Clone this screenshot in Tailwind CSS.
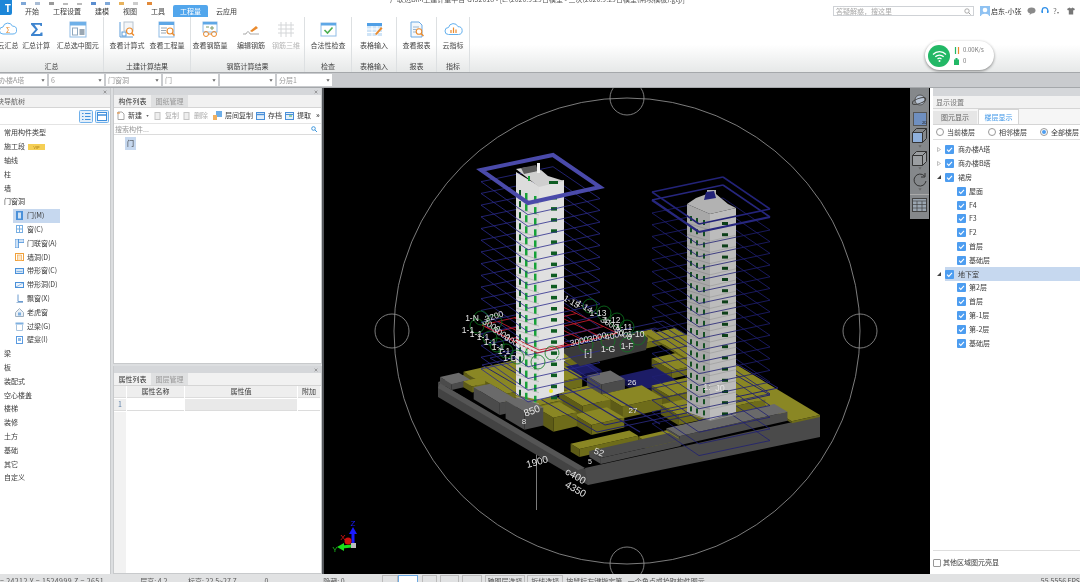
<!DOCTYPE html>
<html lang="zh-CN">
<head>
<meta charset="UTF-8">
<title>GTJ2018</title>
<script src="https://cdn.jsdelivr.net/npm/@tailwindcss/browser@4"></script>
</head>
<body class="bg-white">
<svg class="hidden">
  <symbol id="chk" viewBox="0 0 9 9"><rect width="9" height="9" rx="1" fill="#4d9df0"/><path d="M2 4.6l1.8 1.8L7 2.9" fill="none" stroke="#fff" stroke-width="1.1"/></symbol>
  <symbol id="close" viewBox="0 0 5 5"><path d="M.8.8l3.4 3.4M4.2.8L.8 4.2" stroke="#777" stroke-width=".8"/></symbol>
  <symbol id="caret" viewBox="0 0 5 3"><path d="M.5 0h4L2.500 3z" fill="#666"/></symbol>
</svg>

<div class="w-[1080px] h-[582px] overflow-hidden flex flex-col relative text-[7px] text-[#3a3a3a] blur-[0.35px] font-['Noto_Sans_CJK_SC','Liberation_Sans',sans-serif]">

  <!-- title + tabs -->
  <div class="h-[17px] flex shrink-0 bg-white">
    <div class="w-[12px] h-[15px] bg-[#1c86d8] rounded-br-[2px] flex items-center justify-end pr-[1px] text-white font-bold text-[10px] leading-none">T</div>
    <div class="flex-1 flex flex-col">
      <div class="h-[5px] relative overflow-hidden flex items-end">
        <div class="flex items-end gap-[9px] pl-[9px] h-full">
          <span class="w-[5px] h-[3px] bg-[#7fa8d8]"></span><span class="w-[5px] h-[3px] bg-[#a9bcd4]"></span><span class="w-[5px] h-[3px] bg-[#999]"></span><span class="w-[5px] h-[2px] bg-[#bbb]"></span><span class="w-[5px] h-[2px] bg-[#bbb]"></span><span class="w-[5px] h-[3px] bg-[#5b8ed0]"></span><span class="w-[5px] h-[3px] bg-[#7fa8d8]"></span><span class="w-[5px] h-[3px] bg-[#e7b25d]"></span><span class="w-[5px] h-[3px] bg-[#ccc]"></span><span class="w-[5px] h-[3px] bg-[#e28a3a]"></span>
        </div>
        <div class="absolute left-[378px] top-[-5px] whitespace-nowrap text-[#555] leading-[9px]">广联达BIM土建计量平台 GTJ2018 - [E:\2020.9.29日模型 - 三次(2020.9.29日模型(闸坝模板).gtj)]</div>
      </div>
      <div class="h-[12px] flex items-center pl-[13px] pr-[5px] gap-[14px] leading-none">
        <span>开始</span><span>工程设置</span><span>建模</span><span>视图</span><span>工具</span>
        <span class="ml-[-6px] w-[35px] h-[12px] bg-[#52a6ec] text-white flex items-center justify-center rounded-t-[2px]">工程量</span>
        <span class="ml-[-6px]">云应用</span>
        <div class="ml-auto flex items-center">
          <div class="w-[141px] h-[10px] border border-[#cfd2d6] flex items-center justify-between px-[2px] text-[#a8a8a8]">
            <span>答疑解惑，搜这里</span>
            <svg width="7" height="7" viewBox="0 0 7 7"><circle cx="3" cy="3" r="2.200" fill="none" stroke="#999" stroke-width=".8"/><path d="M4.600 4.600L6.500 6.500" stroke="#999"/></svg>
          </div>
          <svg class="ml-[6px]" width="10" height="10" viewBox="0 0 10 10"><rect width="10" height="10" fill="#8fc2f2"/><circle cx="5" cy="4" r="2.300" fill="#fff"/><path d="M1 10c0-3 8-3 8 0z" fill="#fff"/></svg>
          <span class="ml-[1px] w-[32px] text-[#333] whitespace-nowrap">启东-小张</span>
          <svg class="ml-[4px]" width="9" height="8" viewBox="0 0 9 8"><ellipse cx="4.500" cy="3.500" rx="4" ry="3" fill="#8a8a8a"/><path d="M3 6l-.5 2L5 6.300z" fill="#8a8a8a"/></svg>
          <svg class="ml-[5px]" width="8" height="8" viewBox="0 0 8 8"><path d="M1.200 5V3.500a2.800 2.800 0 0 1 5.600 0V5" fill="none" stroke="#2f8fe8" stroke-width="1.200"/><rect x=".5" y="3.500" width="1.500" height="2.500" fill="#2f8fe8"/><rect x="6" y="3.500" width="1.500" height="2.500" fill="#2f8fe8"/></svg>
          <span class="ml-[4px] w-[8px] text-[#777] text-[8px] leading-none whitespace-nowrap">?<span class="text-[4px]">▾</span></span>
          <svg class="ml-[6px]" width="8" height="8" viewBox="0 0 8 8"><path d="M2.500.5L0 2l1 1.500.8-.4V7.500h4.400V3.100l.8.400L8 2 5.500.5 4 1.500z" fill="#777"/></svg>
        </div>
      </div>
    </div>
  </div>

  <!-- ribbon -->
  <div class="h-[56px] shrink-0 flex border-b border-[#a5a8ab] bg-gradient-to-b from-white via-white to-[#e6e8e8] text-[#444]">
    <div class="w-[104px] shrink-0 border-r border-[#dde0e2] flex flex-col justify-between pb-[1px]">
      <div class="flex pt-[4px]">
        <div class="w-[24px] ml-[-4px] flex flex-col items-center">
          <svg width="18" height="17" viewBox="0 0 18 17"><path d="M4 13a3.500 3.500 0 0 1 0-7 5 5 0 0 1 9.500-.8A3.800 3.800 0 0 1 14 13z" fill="#fff" stroke="#63b0ee"/><text x="9" y="11.500" text-anchor="middle" font-size="7" fill="#e88a2e">Σ</text></svg>
          <span class="mt-[2px] leading-[10px] whitespace-nowrap">云汇总</span>
        </div>
        <div class="w-[33px] flex flex-col items-center">
          <svg width="17" height="17" viewBox="0 0 17 17"><path d="M3 2h11v3h-1.500l-.5-1.200H6.500L10 8.500 6 13h6l.8-1.500H14.500V15H3v-1.500L7.500 8.500 3 3.500z" fill="#3f85cf"/></svg>
          <span class="mt-[2px] leading-[10px] whitespace-nowrap">汇总计算</span>
        </div>
        <div class="w-[51px] flex flex-col items-center">
          <svg width="18" height="17" viewBox="0 0 18 17"><rect x="1" y="1" width="16" height="15" fill="#fff" stroke="#8fbce6"/><rect x="1" y="1" width="16" height="3.500" fill="#6fb0e8"/><rect x="3.500" y="7" width="5" height="7" fill="none" stroke="#8fa8bf"/><rect x="10.500" y="8" width="5" height="6" fill="#9aa7b3"/></svg>
          <span class="mt-[2px] leading-[10px] whitespace-nowrap">汇总选中图元</span>
        </div>
      </div>
      <div class="text-center leading-[10px]">汇总</div>
    </div>

    <div class="w-[87px] shrink-0 border-r border-[#dde0e2] flex flex-col justify-between pb-[1px]">
      <div class="flex pt-[4px] pl-[3px]">
        <div class="w-[40px] flex flex-col items-center">
          <svg width="18" height="17" viewBox="0 0 18 17"><path d="M2 1v15h13" fill="none" stroke="#5b9bd8"/><rect x="4" y="11" width="4" height="4" fill="none" stroke="#5b9bd8"/><rect x="6" y="1" width="9" height="9" fill="#f4f6f8" stroke="#b8c4d0"/><circle cx="11.500" cy="10" r="3" fill="#fff" stroke="#ea8a2d" stroke-width="1.200"/><path d="M13.500 12l2.500 2.500" stroke="#ea8a2d" stroke-width="1.500"/></svg>
          <span class="mt-[2px] leading-[10px] whitespace-nowrap">查看计算式</span>
        </div>
        <div class="w-[40px] flex flex-col items-center">
          <svg width="18" height="17" viewBox="0 0 18 17"><rect x="1" y="1" width="15" height="15" fill="#fff" stroke="#8fbce6"/><rect x="1" y="1" width="15" height="3" fill="#5ea7e6"/><path d="M3 7h6M3 9.500h5M3 12h5" stroke="#9aa7b3"/><circle cx="12" cy="10" r="3" fill="#fff" stroke="#ea8a2d" stroke-width="1.200"/><path d="M14 12l2.500 2.500" stroke="#ea8a2d" stroke-width="1.500"/></svg>
          <span class="mt-[2px] leading-[10px] whitespace-nowrap">查看工程量</span>
        </div>
      </div>
      <div class="text-center leading-[10px]">土建计算结果</div>
    </div>

    <div class="w-[114px] shrink-0 border-r border-[#dde0e2] flex flex-col justify-between pb-[1px]">
      <div class="flex pt-[4px]">
        <div class="w-[38px] flex flex-col items-center">
          <svg width="18" height="17" viewBox="0 0 18 17"><rect x="2" y="1" width="14" height="10" fill="#fff" stroke="#8fbce6"/><rect x="2" y="1" width="14" height="2.500" fill="#5ea7e6"/><path d="M5 6h3M11 5v4M9 7h4" stroke="#7c9a6a"/><circle cx="5" cy="13" r="2.500" fill="none" stroke="#ea8a2d"/><circle cx="13" cy="13" r="2.500" fill="none" stroke="#ea8a2d"/><path d="M7.500 13h3" stroke="#ea8a2d"/></svg>
          <span class="mt-[2px] leading-[10px] whitespace-nowrap">查看钢筋量</span>
        </div>
        <div class="w-[44px] flex flex-col items-center">
          <svg width="18" height="17" viewBox="0 0 18 17"><path d="M1 13h3c1-3 3-3 4 0h9" fill="none" stroke="#a9a9a9"/><path d="M8 10l6-5 2 2-6 4z" fill="#ea8a2d"/></svg>
          <span class="mt-[2px] leading-[10px] whitespace-nowrap">编辑钢筋</span>
        </div>
        <div class="w-[26px] flex flex-col items-center text-[#b5b5b5]">
          <svg width="18" height="17" viewBox="0 0 18 17"><path d="M4 1v15M9 1v15M14 1v15M1 4h16M1 8h16M1 12h16" stroke="#d4d6d8"/></svg>
          <span class="mt-[2px] leading-[10px] whitespace-nowrap">钢筋三维</span>
        </div>
      </div>
      <div class="text-center leading-[10px]">钢筋计算结果</div>
    </div>

    <div class="w-[47px] shrink-0 border-r border-[#dde0e2] flex flex-col justify-between pb-[1px]">
      <div class="flex flex-col items-center pt-[4px]">
        <svg width="17" height="17" viewBox="0 0 17 17"><rect x="1" y="2" width="15" height="13" fill="#fff" stroke="#8fbce6"/><rect x="1" y="2" width="15" height="2.500" fill="#5ea7e6"/><path d="M4.500 9l3 3 5-5.500" fill="none" stroke="#4caf50" stroke-width="1.600"/></svg>
        <span class="mt-[2px] leading-[10px] whitespace-nowrap">合法性检查</span>
      </div>
      <div class="text-center leading-[10px]">检查</div>
    </div>

    <div class="w-[45px] shrink-0 border-r border-[#dde0e2] flex flex-col justify-between pb-[1px]">
      <div class="flex flex-col items-center pt-[4px]">
        <svg width="17" height="17" viewBox="0 0 17 17"><rect x="1" y="2" width="15" height="13" fill="#cfe4f7"/><rect x="1" y="2" width="15" height="3" fill="#4f9fe6"/><path d="M1 8h15M1 11.500h15M6 5v10M11 5v10" stroke="#fff"/><path d="M9 13l6-7 1.500 1.500L10.500 14z" fill="#ea8a2d"/></svg>
        <span class="mt-[2px] leading-[10px] whitespace-nowrap">表格输入</span>
      </div>
      <div class="text-center leading-[10px]">表格输入</div>
    </div>

    <div class="w-[40px] shrink-0 border-r border-[#dde0e2] flex flex-col justify-between pb-[1px]">
      <div class="flex flex-col items-center pt-[4px]">
        <svg width="16" height="17" viewBox="0 0 16 17"><path d="M2 1h8l3 3v12H2z" fill="#f4f8fc" stroke="#6aa9e4"/><path d="M4 6h6M4 8.500h3M4 11h3" stroke="#9ab6d0"/><circle cx="10" cy="10.500" r="2.800" fill="#fff" stroke="#ea8a2d" stroke-width="1.100"/><path d="M12 12.500l2.500 2.500" stroke="#ea8a2d" stroke-width="1.400"/></svg>
        <span class="mt-[2px] leading-[10px] whitespace-nowrap">查看报表</span>
      </div>
      <div class="text-center leading-[10px]">报表</div>
    </div>

    <div class="w-[33px] shrink-0 border-r border-[#dde0e2] flex flex-col justify-between pb-[1px]">
      <div class="flex flex-col items-center pt-[4px]">
        <svg width="19" height="17" viewBox="0 0 19 17"><path d="M4.500 13.500a3.500 3.500 0 0 1 0-7 5 5 0 0 1 9.500-.8 3.900 3.900 0 0 1 .5 7.800z" fill="#fff" stroke="#63b0ee"/><path d="M7 12V9M9.500 12V6.500M12 12V8.500" stroke="#ea8a2d" stroke-width="1.200"/></svg>
        <span class="mt-[2px] leading-[10px] whitespace-nowrap">云指标</span>
      </div>
      <div class="text-center leading-[10px]">指标</div>
    </div>
  </div>

  <!-- combos -->
  <div class="h-[15px] shrink-0 bg-[#c9cbce] border-b border-[#a5a8ab] flex items-center text-[#9a9a9a] gap-[2px]">
    <div class="w-[47px] h-[12px] bg-white flex items-center justify-between pr-[2px] overflow-hidden whitespace-nowrap"><span class="ml-[-1px]">办楼A塔</span><svg width="4" height="3"><use href="#caret"/></svg></div>
    <div class="w-[55px] h-[12px] bg-white flex items-center justify-between px-[2px]"><span>6</span><svg width="4" height="3"><use href="#caret"/></svg></div>
    <div class="w-[55px] h-[12px] bg-white flex items-center justify-between px-[2px]"><span>门窗洞</span><svg width="4" height="3"><use href="#caret"/></svg></div>
    <div class="w-[55px] h-[12px] bg-white flex items-center justify-between px-[2px]"><span>门</span><svg width="4" height="3"><use href="#caret"/></svg></div>
    <div class="w-[55px] h-[12px] bg-white flex items-center justify-end px-[2px]"><svg width="4" height="3"><use href="#caret"/></svg></div>
    <div class="w-[55px] h-[12px] bg-white flex items-center justify-between px-[2px]"><span>分层1</span><svg width="4" height="3"><use href="#caret"/></svg></div>
  </div>

  <!-- main -->
  <div class="flex-1 min-h-0 flex bg-[#dcdee0]">

    <!-- left nav -->
    <div class="w-[111px] shrink-0 bg-white border-r border-[#c8cacc] flex flex-col">
      <div class="h-[7px] bg-[#d5d7da] flex justify-end items-center pr-[3px]"><svg width="4" height="4"><use href="#close"/></svg></div>
      <div class="h-[13px] bg-[#f1f1f1] border-b border-[#d5d5d5] flex items-center overflow-hidden whitespace-nowrap text-[#666]"><span class="ml-[-10px]">模块导航树</span></div>
      <div class="h-[17px] flex items-center justify-end gap-[2px] pr-[1px] border-b border-[#e4e4e4]">
        <svg width="14" height="13" viewBox="0 0 14 13"><rect x=".5" y=".5" width="13" height="12" rx="1" fill="#e3effa" stroke="#70b0ea"/><path d="M3 3.500h1.500M6 3.500h5.500M3 6.500h1.500M6 6.500h5.500M3 9.500h1.500M6 9.500h5.500" stroke="#3f8fdc"/></svg>
        <svg width="14" height="13" viewBox="0 0 14 13"><rect x=".5" y=".5" width="13" height="12" rx="1" fill="#e3effa" stroke="#70b0ea"/><rect x="2.500" y="2.500" width="9" height="8" fill="#fff" stroke="#3f8fdc"/><path d="M2.500 5h9" stroke="#3f8fdc" stroke-width="1.500"/></svg>
      </div>
      <div class="pt-[1px] leading-none">
        <div class="h-[13.8px] flex items-center pl-[4px]">常用构件类型</div>
        <div class="h-[13.8px] flex items-center pl-[4px]">施工段<span class="ml-[3px] w-[17px] h-[6px] bg-[#f5cf55] text-[#a87a10] text-[4px] flex items-center justify-center">VIP</span></div>
        <div class="h-[13.8px] flex items-center pl-[4px]">轴线</div>
        <div class="h-[13.8px] flex items-center pl-[4px]">柱</div>
        <div class="h-[13.8px] flex items-center pl-[4px]">墙</div>
        <div class="h-[13.8px] flex items-center pl-[4px]">门窗洞</div>
        <div class="h-[13.8px] flex items-center ml-[13px] w-[47px] pl-[3px] gap-[4px] bg-[#c6d8ef]"><svg width="7" height="9" viewBox="0 0 7 9"><rect width="7" height="9" fill="#4a90d9"/><rect x="2" y="1.500" width="3" height="6" fill="#cfe2f5"/></svg>门(M)</div>
        <div class="h-[13.8px] flex items-center ml-[13px] pl-[3px] gap-[4px]"><svg width="7" height="8" viewBox="0 0 7 8"><rect x=".5" y=".5" width="6" height="7" fill="none" stroke="#77aee2"/><path d="M3.500 0v8M0 4h7" stroke="#77aee2"/></svg>窗(C)</div>
        <div class="h-[13.8px] flex items-center ml-[13px] pl-[2px] gap-[3px]"><svg width="9" height="9" viewBox="0 0 9 9"><path d="M0 0h3.500v9H0zM3.500 0H9v3.500H3.500z" fill="#cfe2f5" stroke="#4a90d9" stroke-width=".8"/></svg>门联窗(A)</div>
        <div class="h-[13.8px] flex items-center ml-[13px] pl-[2px] gap-[3px]"><svg width="9" height="8" viewBox="0 0 9 8"><rect x=".5" y=".5" width="8" height="7" fill="#fff" stroke="#f0a13c"/><rect x="2.500" y="2" width="4" height="5.500" fill="#fde7c8" stroke="#f0a13c" stroke-width=".6"/></svg>墙洞(D)</div>
        <div class="h-[13.8px] flex items-center ml-[13px] pl-[2px] gap-[3px]"><svg width="9" height="6" viewBox="0 0 9 6"><rect x=".5" y=".5" width="8" height="5" fill="#d8e8f7" stroke="#4a90d9"/><path d="M1.500 3.500h6" stroke="#4a90d9" stroke-width=".6"/></svg>带形窗(C)</div>
        <div class="h-[13.8px] flex items-center ml-[13px] pl-[2px] gap-[3px]"><svg width="9" height="6" viewBox="0 0 9 6"><rect x=".5" y=".5" width="8" height="5" fill="#eef4fb" stroke="#4a90d9"/><path d="M1 5l7-4" stroke="#4a90d9" stroke-width=".6"/></svg>带形洞(D)</div>
        <div class="h-[13.8px] flex items-center ml-[13px] pl-[2px] gap-[3px]"><svg width="9" height="9" viewBox="0 0 9 9"><path d="M3 .5v7H8" fill="none" stroke="#6a9bd0"/><path d="M1.500 8.500H8" stroke="#9cb9d8"/></svg>飘窗(X)</div>
        <div class="h-[13.8px] flex items-center ml-[13px] pl-[2px] gap-[3px]"><svg width="9" height="9" viewBox="0 0 9 9"><path d="M.5 4.500L4.500.5l4 4V8.500h-8z" fill="#eaf0f6" stroke="#9fb0c0"/><rect x="3" y="4.500" width="3" height="3" fill="#7fb0e0"/></svg>老虎窗</div>
        <div class="h-[13.8px] flex items-center ml-[13px] pl-[2px] gap-[3px]"><svg width="9" height="9" viewBox="0 0 9 9"><rect x=".5" y=".5" width="8" height="2" fill="#7fb0e0"/><path d="M1.500 2.500V8.500h6V2.500" fill="none" stroke="#a9c4de"/></svg>过梁(G)</div>
        <div class="h-[13.8px] flex items-center ml-[13px] pl-[3px] gap-[4px]"><svg width="7" height="8" viewBox="0 0 7 8"><rect x=".5" y=".5" width="6" height="7" fill="#fff" stroke="#5a9ae0"/><rect x="2" y="2" width="3" height="3" fill="#8dbbe8"/></svg>壁龛(I)</div>
        <div class="h-[13.8px] flex items-center pl-[4px]">梁</div>
        <div class="h-[13.8px] flex items-center pl-[4px]">板</div>
        <div class="h-[13.8px] flex items-center pl-[4px]">装配式</div>
        <div class="h-[13.8px] flex items-center pl-[4px]">空心楼盖</div>
        <div class="h-[13.8px] flex items-center pl-[4px]">楼梯</div>
        <div class="h-[13.8px] flex items-center pl-[4px]">装修</div>
        <div class="h-[13.8px] flex items-center pl-[4px]">土方</div>
        <div class="h-[13.8px] flex items-center pl-[4px]">基础</div>
        <div class="h-[13.8px] flex items-center pl-[4px]">其它</div>
        <div class="h-[13.8px] flex items-center pl-[4px]">自定义</div>
      </div>
    </div>

    <!-- middle -->
    <div class="w-[209px] shrink-0 ml-[2px] flex flex-col">
      <div class="h-[276px] bg-white border-x border-b border-[#c8cacc] flex flex-col">
        <div class="h-[7px] bg-[#d5d7da] flex justify-end items-center pr-[3px]"><svg width="4" height="4"><use href="#close"/></svg></div>
        <div class="h-[13px] bg-[#f1f1f1] border-b border-[#d5d5d5] flex items-end">
          <span class="w-[37px] h-[12px] flex items-center justify-center text-[#333]">构件列表</span>
          <span class="w-[37px] h-[12px] bg-[#dfe0e1] flex items-center justify-center text-[#999]">图纸管理</span>
        </div>
        <div class="h-[16px] flex items-center pl-[3px] gap-[3px] whitespace-nowrap border-b border-[#e5e5e5]">
          <svg width="8" height="9" viewBox="0 0 8 9"><path d="M1 1h4l2 2v5.500H1z" fill="#fff" stroke="#a8a8a8"/><path d="M0 2h3" stroke="#ea8a2d"/></svg>
          <span>新建</span><svg class="ml-[1px]" width="3" height="2"><use href="#caret"/></svg>
          <svg class="ml-[2px]" width="8" height="8" viewBox="0 0 8 8"><rect x="1" y=".5" width="5" height="7" fill="#eee" stroke="#c5c5c5"/></svg><span class="text-[#aaa]">复制</span>
          <svg class="ml-[1px]" width="8" height="8" viewBox="0 0 8 8"><rect x="1" y=".5" width="5" height="7" fill="#eee" stroke="#c5c5c5"/></svg><span class="text-[#aaa]">删除</span>
          <svg class="ml-[2px]" width="9" height="9" viewBox="0 0 9 9"><rect x="3" y="0" width="6" height="6" fill="#6eaee8"/><rect x="0" y="4" width="4" height="5" fill="#f0b060"/></svg><span>层间复制</span>
          <svg width="9" height="8" viewBox="0 0 9 8"><rect x=".5" y=".5" width="8" height="7" fill="#e3effa" stroke="#4a90d9"/><path d="M.5 2.500h8" stroke="#4a90d9" stroke-width="1.400"/></svg><span>存档</span>
          <svg width="9" height="8" viewBox="0 0 9 8"><rect x=".5" y=".5" width="8" height="7" fill="#e3effa" stroke="#4a90d9"/><path d="M.5 2.500h8" stroke="#4a90d9"/><path d="M4 4h3" stroke="#4caf50"/></svg><span>提取</span>
          <span class="ml-[2px] font-bold">»</span>
        </div>
        <div class="h-[11px] flex items-center justify-between px-[1px] pr-[4px] text-[#999] border-b border-[#dcdcdc]">
          <span>搜索构件...</span>
          <svg width="6" height="6" viewBox="0 0 6 6"><circle cx="2.500" cy="2.500" r="1.800" fill="none" stroke="#3f97dc"/><path d="M4 4l2 2" stroke="#3f97dc"/></svg>
        </div>
        <div class="pt-[2px] pl-[11px]"><span class="w-[11px] h-[13px] bg-[#c6d8ef] flex items-center justify-center text-[#333]">门</span></div>
      </div>
      <div class="flex-1 mt-[2px] bg-white border-x border-b border-[#c8cacc] flex flex-col">
        <div class="h-[7px] bg-[#d5d7da] flex justify-end items-center pr-[3px]"><svg width="4" height="4"><use href="#close"/></svg></div>
        <div class="h-[13px] bg-[#f1f1f1] border-b border-[#d5d5d5] flex items-end">
          <span class="w-[37px] h-[12px] flex items-center justify-center text-[#333]">属性列表</span>
          <span class="w-[37px] h-[12px] bg-[#dfe0e1] flex items-center justify-center text-[#999]">图层管理</span>
        </div>
        <div class="flex-1 grid grid-cols-[12px_57px_112px_22px] grid-rows-[12px_12px_1fr] gap-[1px] text-center">
          <div class="bg-[#eeeeee] border-b border-[#dcdcdc]"></div>
          <div class="bg-[#eeeeee] border-b border-[#dcdcdc] flex items-center justify-center">属性名称</div>
          <div class="bg-[#eeeeee] border-b border-[#dcdcdc] flex items-center justify-center">属性值</div>
          <div class="bg-[#eeeeee] border-b border-[#dcdcdc] flex items-center justify-center">附加</div>
          <div class="bg-[#eeeeee] border-b border-[#dcdcdc] flex items-center justify-center text-[#5a7fa8]">1</div>
          <div class="border-b border-[#dcdcdc]"></div>
          <div class="bg-[#e9e9e9] border-b border-[#dcdcdc]"></div>
          <div class="border-b border-[#dcdcdc]"></div>
          <div class="bg-[#f2f2f2]"></div>
        </div>
      </div>
    </div>

    <!-- canvas -->
    <div class="w-[608px] shrink-0 relative bg-black border-l-2 border-[#55585c]">
      <svg id="scene" class="absolute left-0 top-0" width="606" height="486" viewBox="324 88 606 486"></svg>
      <!-- view toolbar -->
      <div class="absolute right-[1px] top-0 w-[19px] h-[131px] bg-[#85888b] flex flex-col items-center pt-[6px]">
        <svg width="15" height="13" viewBox="0 0 15 13"><circle cx="8" cy="6" r="5" fill="#b9c4d4" stroke="#555"/><ellipse cx="7" cy="7" rx="7" ry="2.500" fill="none" stroke="#444" transform="rotate(-20 7 7)"/></svg>
        <svg class="mt-[5px]" width="14" height="14" viewBox="0 0 14 14"><rect x=".5" y=".5" width="13" height="13" fill="#6f8fc0" stroke="#555"/><text x="9" y="12" font-size="4" fill="#222">2D</text></svg>
        <svg class="mt-[2px]" width="15" height="15" viewBox="0 0 15 15"><rect x="1" y="5" width="9" height="9" fill="#8fb0dc"/><path d="M.5 4.500h10v10H.5zM.5 4.500l4-4h10v10l-4 4M10.500 4.500l4-4" fill="none" stroke="#333"/></svg>
        <svg class="mt-[2px]" width="4" height="3"><use href="#caret"/></svg>
        <svg class="mt-[3px]" width="15" height="15" viewBox="0 0 15 15"><path d="M.5 4.500h10v10H.5zM.5 4.500l4-4h10v10l-4 4M10.500 4.500l4-4" fill="#9b9ea1" stroke="#333"/></svg>
        <svg class="mt-[1px]" width="4" height="3"><use href="#caret"/></svg>
        <svg class="mt-[3px]" width="14" height="14" viewBox="0 0 14 14"><path d="M11.500 3A6 6 0 1 0 13 8" fill="none" stroke="#333"/><path d="M12 0v4H8" fill="none" stroke="#333"/></svg>
        <svg class="mt-[1px]" width="4" height="3"><use href="#caret"/></svg>
        <div class="mt-[3px] w-full h-px bg-[#aaa]"></div>
        <svg class="mt-[3px]" width="15" height="14" viewBox="0 0 15 14"><rect x=".5" y=".5" width="14" height="13" fill="#9aa5b0" stroke="#444"/><path d="M.5 3h14M5 3v10M10 3v10M.5 6.500h14M.5 10h14" stroke="#444" stroke-width=".7"/></svg>
      </div>
    </div>

    <!-- right panel -->
    <div class="w-[150px] shrink-0 bg-white flex flex-col border-l-[3px] border-white">
      <div class="h-[8px] bg-[#d5d7da]"></div>
      <div class="h-[13px] bg-[#f1f1f1] border-b border-[#d5d5d5] flex items-center pl-[3px] text-[#777]">显示设置</div>
      <div class="h-[16px] bg-[#f6f6f6] border-b border-[#d5d5d5] flex items-end gap-[1px]">
        <span class="w-[44px] h-[13px] bg-[#e6e6e6] flex items-center justify-center text-[#666]">图元显示</span>
        <span class="w-[41px] h-[15px] bg-white border-x border-t border-[#d5d5d5] flex items-center justify-center text-[#3f97e8]">楼层显示</span>
      </div>
      <div class="h-[15px] flex items-center pl-[3px] border-b border-[#dedede] whitespace-nowrap">
        <span class="w-[8px] h-[8px] rounded-full border border-[#999]"></span><span class="ml-[3px] w-[41px]">当前楼层</span>
        <span class="w-[8px] h-[8px] rounded-full border border-[#999]"></span><span class="ml-[3px] w-[41px]">相邻楼层</span>
        <span class="w-[8px] h-[8px] rounded-full border border-[#999] flex items-center justify-center"><span class="w-[4px] h-[4px] rounded-full bg-[#4d9df0]"></span></span><span class="ml-[3px]">全部楼层</span>
      </div>
      <div class="flex-1 pt-[3px] leading-none">
        <div class="h-[13.8px] flex items-center pl-[4px]"><svg width="4" height="5" viewBox="0 0 4 5"><path d="M.5.500l3 2-3 2z" fill="#fff" stroke="#999" stroke-width=".6"/></svg><svg class="ml-[4px]" width="9" height="9"><use href="#chk"/></svg><span class="ml-[4px]">商办楼A塔</span></div>
        <div class="h-[13.8px] flex items-center pl-[4px]"><svg width="4" height="5" viewBox="0 0 4 5"><path d="M.5.500l3 2-3 2z" fill="#fff" stroke="#999" stroke-width=".6"/></svg><svg class="ml-[4px]" width="9" height="9"><use href="#chk"/></svg><span class="ml-[4px]">商办楼B塔</span></div>
        <div class="h-[13.8px] flex items-center pl-[4px]"><svg width="4" height="5" viewBox="0 0 4 5"><path d="M0 4h4V0z" fill="#444"/></svg><svg class="ml-[4px]" width="9" height="9"><use href="#chk"/></svg><span class="ml-[4px]">裙房</span></div>
        <div class="h-[13.8px] flex items-center pl-[24px]"><svg width="9" height="9"><use href="#chk"/></svg><span class="ml-[3px]">屋面</span></div>
        <div class="h-[13.8px] flex items-center pl-[24px]"><svg width="9" height="9"><use href="#chk"/></svg><span class="ml-[3px]">F4</span></div>
        <div class="h-[13.8px] flex items-center pl-[24px]"><svg width="9" height="9"><use href="#chk"/></svg><span class="ml-[3px]">F3</span></div>
        <div class="h-[13.8px] flex items-center pl-[24px]"><svg width="9" height="9"><use href="#chk"/></svg><span class="ml-[3px]">F2</span></div>
        <div class="h-[13.8px] flex items-center pl-[24px]"><svg width="9" height="9"><use href="#chk"/></svg><span class="ml-[3px]">首层</span></div>
        <div class="h-[13.8px] flex items-center pl-[24px]"><svg width="9" height="9"><use href="#chk"/></svg><span class="ml-[3px]">基础层</span></div>
        <div class="h-[13.8px] flex items-center pl-[4px]"><svg width="4" height="5" viewBox="0 0 4 5"><path d="M0 4h4V0z" fill="#444"/></svg><span class="ml-[4px] flex-1 h-full bg-[#c6d8ef] flex items-center"><svg width="9" height="9"><use href="#chk"/></svg><span class="ml-[4px]">地下室</span></span></div>
        <div class="h-[13.8px] flex items-center pl-[24px]"><svg width="9" height="9"><use href="#chk"/></svg><span class="ml-[3px]">第2层</span></div>
        <div class="h-[13.8px] flex items-center pl-[24px]"><svg width="9" height="9"><use href="#chk"/></svg><span class="ml-[3px]">首层</span></div>
        <div class="h-[13.8px] flex items-center pl-[24px]"><svg width="9" height="9"><use href="#chk"/></svg><span class="ml-[3px]">第-1层</span></div>
        <div class="h-[13.8px] flex items-center pl-[24px]"><svg width="9" height="9"><use href="#chk"/></svg><span class="ml-[3px]">第-2层</span></div>
        <div class="h-[13.8px] flex items-center pl-[24px]"><svg width="9" height="9"><use href="#chk"/></svg><span class="ml-[3px]">基础层</span></div>
      </div>
      <div class="h-[24px] border-t border-[#dedede] flex items-center gap-[2px]">
        <span class="w-[8px] h-[8px] border border-[#999] rounded-[1px]"></span>其他区域图元亮显
      </div>
    </div>
  </div>

  <!-- status bar, mostly cut off by the window -->
  <div class="h-[8px] shrink-0 bg-[#e1e2e3] flex whitespace-nowrap overflow-hidden text-[#555] leading-[8px] pt-[3px]">
    <span class="w-[141px] tracking-[0.4px]">= 24212 Y = 1524999 Z = 2651</span>
    <span class="w-[48px]">层高: 4.2</span>
    <span class="w-[77px]">标高: 22.5~27.7</span>
    <span class="w-[59px]">0</span>
    <span class="w-[59px]">隐藏: 0</span>
    <span class="w-[16px] h-[10px] border border-[#bbb] mt-[-2px]"></span>
    <span class="w-[20px] h-[10px] border border-[#6aa9e4] bg-white mt-[-2px]"></span>
    <span class="ml-[4px] w-[15px] h-[10px] border border-[#bbb] mt-[-2px]"></span>
    <span class="ml-[3px] w-[19px] h-[10px] border border-[#bbb] mt-[-2px]"></span>
    <span class="ml-[3px] w-[20px] h-[10px] border border-[#bbb] mt-[-2px]"></span>
    <span class="ml-[3px] w-[41px] h-[10px] border border-[#bbb] mt-[-2px] pt-[1px] text-center">跨图层选择</span>
    <span class="ml-[2px] w-[36px] h-[10px] border border-[#bbb] mt-[-2px] pt-[1px] text-center">折线选择</span>
    <span class="ml-[3px] w-[62px]">按鼠标左键指定第</span>
    <span class="w-[28px]">一个角点</span>
    <span class="w-[387px]">或拾取构件图元</span>
    <span>55.5556 FPS</span>
  </div>

  <!-- network widget floating over the ribbon -->
  <div class="absolute left-[925px] top-[41px] w-[69px] h-[29px] rounded-full bg-white shadow-[0_1px_3px_rgba(0,0,0,.45)] flex items-center pl-[3px]">
    <div class="w-[22px] h-[22px] rounded-full bg-[#22b866] flex items-center justify-center">
      <svg width="15" height="12" viewBox="0 0 15 12"><path d="M1 4.500a9 9 0 0 1 13 0M3.300 6.800a6 6 0 0 1 8.400 0M5.500 9a3 3 0 0 1 4 0" fill="none" stroke="#fff" stroke-width="1.200"/><circle cx="7.500" cy="11" r="1" fill="#fff"/></svg>
    </div>
    <div class="ml-[4px] flex flex-col gap-[4px] text-[#777] text-[6px] leading-none">
      <div class="flex items-center gap-[3px]"><svg width="6" height="7" viewBox="0 0 6 7"><path d="M1.500 0v7" stroke="#22b866" stroke-width="1.200"/><path d="M4.500 0v7" stroke="#ea8a2d" stroke-width="1.200"/></svg>0.00K/s</div>
      <div class="flex items-center gap-[3px]"><svg width="6" height="7" viewBox="0 0 6 7"><rect y="1.500" width="5" height="5.500" fill="#22b866"/><rect x="1.500" width="2" height="2" fill="#22b866"/></svg>0</div>
    </div>
  </div>
</div>

<script>
  var NS = "http://www.w3.org/2000/svg";
  var scene = document.getElementById("scene");

  function add(tag, attrs, text) {
    var el = document.createElementNS(NS, tag);
    for (var k in attrs) el.setAttribute(k, attrs[k]);
    if (text) el.textContent = text;
    scene.appendChild(el);
    return el;
  }
  function poly(pts, fill, stroke, sw) {
    add("polygon", { points: pts.map(function (p) { return p[0] + "," + p[1]; }).join(" "), fill: fill || "none", stroke: stroke || "none", "stroke-width": sw || 1 });
  }
  function line(a, b, color, sw) {
    add("line", { x1: a[0], y1: a[1], x2: b[0], y2: b[1], stroke: color, "stroke-width": sw || 1 });
  }
  function label(x, y, s, rot, size, color) {
    add("text", { x: x, y: y, fill: color || "#e4e4e4", "font-size": size || 9, "font-family": "Liberation Sans, sans-serif", "text-anchor": "middle", transform: "rotate(" + (rot || 0) + " " + x + " " + y + ")" }, s);
  }

  // grid circles
  [[627, 331, 233], [627, 98, 17], [392, 331, 17], [860, 331, 17], [627, 564, 17]].forEach(function (c) {
    add("circle", { cx: c[0], cy: c[1], r: c[2], fill: "none", stroke: "#9a9a9a", "stroke-width": 0.8 });
  });
  line([536.5, 440], [536.5, 510], "#9a9a9a", 0.8);

  // basement on an isometric plane
  function iso(u, v, h) { return [585 + 235 * u - 145 * v, 470 - 53 * u - 87 * v - (h || 0)]; }
  var Y = "#7d7b1f", YT = "#8a8724", YS = "#5d5b17", G = "#6a6a6a", GS = "#4b4b4b", N = "#1c1c66";

  poly([[438, 382], [500, 365], [505, 370], [442, 387]], "#5a5a5a");
  poly([[438, 382], [580, 467], [588, 470], [588, 485], [438, 397]], "#434343");
  poly([[585, 468], [820, 416], [820, 437], [588, 485]], "#4a4a4a");
  poly([[440, 383], [585, 468], [578, 470], [438, 388]], "#555");

  var blocks = [
    [.88, 0, 1, 1, 2, Y], [.1, .9, .9, 1, 6, Y],
    [.56, .52, .72, .68, 5, N], [.44, .76, .54, .92, 5, N],
    [.42, .03, .88, .12, 9, G], [.05, .12, .3, .18, 8, Y],
    [.08, .02, .42, .1, 6, GS], [.3, .03, .42, .12, 7, Y],
    [.72, .15, .86, .3, 12, Y], [.52, .2, .7, .32, 10, Y], [.58, .36, .74, .48, 12, Y],
    [.78, .4, .88, .55, 10, Y], [.74, .6, .88, .74, 8, Y],
    [.38, .36, .55, .5, 12, Y], [.26, .44, .38, .6, 12, Y], [.2, .28, .34, .4, 10, Y],
    [.1, .38, .2, .5, 14, Y], [.02, .45, .1, .58, 18, G],
    [.1, .7, .42, .85, 10, Y], [.12, .56, .25, .68, 8, Y],
    [.02, .62, .09, .8, 12, G], [.44, .6, .54, .7, 10, G],
    [.05, .86, .3, .92, 6, Y], [.0, .92, .08, 1, 6, G]
  ];
  blocks.sort(function (a, b) { return (b[0] + b[1]) - (a[0] + a[1]); });
  blocks.forEach(function (b) {
    var u0 = b[0], v0 = b[1], u1 = b[2], v1 = b[3], h = b[4], c = b[5];
    var side = c === Y ? YS : c === N ? "#111144" : GS;
    poly([iso(u0, v0), iso(u1, v0), iso(u1, v0, h), iso(u0, v0, h)], c === Y ? "#6e6c1a" : side);
    poly([iso(u0, v0), iso(u0, v1), iso(u0, v1, h), iso(u0, v0, h)], side);
    poly([iso(u0, v0, h), iso(u1, v0, h), iso(u1, v1, h), iso(u0, v1, h)], c === Y ? YT : c);
  });

  // basement outlines running across the yellow blocks
  poly([[482, 365], [597, 432], [770, 395], [655, 328]], "none", "#24246e", 1);
  poly([[490, 358], [605, 425], [778, 388], [663, 321]], "none", "#24246e", 1);
  line([540, 372], [640, 432], "#24246e", 1.2);
  line([560, 366], [660, 424], "#24246e", 1.2);

  // floor outlines behind the towers
  var T1 = [[481, 0], [553, -15], [600, 17], [528, 33]];
  var T2 = [[652, 0], [723, -15], [770, 17], [699, 32]];
  function outlineBack(T, y, color, sw) {
    line([T[0][0], y + T[0][1]], [T[1][0], y + T[1][1]], color, sw);
    line([T[1][0], y + T[1][1]], [T[2][0], y + T[2][1]], color, sw);
  }
  function outlineFront(T, y, color, sw) {
    line([T[2][0], y + T[2][1]], [T[3][0], y + T[3][1]], color, sw);
    line([T[3][0], y + T[3][1]], [T[0][0], y + T[0][1]], color, sw);
  }
  var i;
  for (i = 0; i < 19; i++) outlineBack(T2, 213 + i * 11.7, "#1f1f72", 0.8);
  for (i = 1; i < 18; i++) outlineBack(T1, 170 + i * 11.7, "#2b2b8c", 0.8);
  outlineBack(T2, 192, "#232378", 1.6);
  outlineBack(T2, 200, "#27277f", 1.6);

  // podium plate and red grid
  poly([[560, 350], [640, 332], [648, 338], [646, 350], [580, 366]], "#3a3a3a");
  var PA = [482, 325], PB = [563, 307], PC = [617, 333], PD = [537, 353];
  function mix(a, b, t) { return [a[0] + (b[0] - a[0]) * t, a[1] + (b[1] - a[1]) * t]; }
  for (i = 0; i <= 5; i++) line(mix(PA, PB, i / 5), mix(PD, PC, i / 5), "#c01a2a", 0.9);
  for (i = 0; i <= 4; i++) line(mix(PA, PD, i / 4), mix(PB, PC, i / 4), "#c01a2a", 0.9);

  // tower B
  poly([[687, 204], [710, 214], [710, 420], [687, 412]], "#a8a8a8");
  poly([[710, 214], [736, 208], [736, 412], [710, 420]], "#bcbcbc");
  poly([[696, 198], [707, 194], [707, 190], [716, 190], [716, 194], [728, 204], [736, 208], [710, 214], [687, 204]], "#b2b2b2");
  poly([[706, 192], [714, 191], [716, 198], [704, 200]], "#232378");
  for (i = 0; i < 18; i++) {
    var by = 222 + i * 11.2;
    add("rect", { x: 722, y: by, width: 6, height: 3, fill: "#0c3f18" });
    add("rect", { x: 690, y: by - 6, width: 2, height: 5, fill: "#144f22" });
    add("rect", { x: 696, y: by - 4, width: 2, height: 5, fill: "#144f22" });
    add("rect", { x: 703, y: by - 2, width: 2, height: 5, fill: "#144f22" });
    line([687, by + 1], [710, by + 8], "#8c8c8c", 0.7);
    line([710, by + 8], [736, by + 2], "#9e9e9e", 0.7);
  }
  for (i = 0; i < 19; i++) outlineFront(T2, 213 + i * 11.7, "#1f1f72", 0.8);
  outlineFront(T2, 192, "#232378", 1.6);
  outlineFront(T2, 200, "#27277f", 2.2);

  // tower A
  poly([[516, 172], [539, 186], [539, 400], [516, 395]], "#dcdcdc");
  poly([[539, 186], [564, 180], [564, 392], [539, 400]], "#e0e0e0");
  poly([[516, 169], [528, 167], [530, 172], [541, 170], [548, 176], [564, 181], [539, 187]], "#cfcfcf");
  poly([[521, 168], [536, 165], [538, 171], [524, 174]], "#5c5c5c");
  add("rect", { x: 537, y: 163, width: 3, height: 10, fill: "#f2f2f2" });
  add("rect", { x: 549, y: 181, width: 9, height: 3, fill: "#0e5c22" });
  add("rect", { x: 528, y: 176, width: 2, height: 5, fill: "#17a238" });
  for (i = 0; i < 19; i++) {
    var ty = 196 + i * 11.1;
    add("rect", { x: 551, y: ty, width: 6, height: 3.5, fill: "#0e5c22" });
    add("rect", { x: 519, y: ty - 6, width: 2, height: 6, fill: "#0c5a20" });
    add("rect", { x: 525, y: ty - 3, width: 2.500, height: 7, fill: "#17a238" });
    add("rect", { x: 534, y: ty, width: 2.500, height: 7, fill: "#17a238" });
    line([516, ty + 1], [539, ty + 8], "#a8a8a8", 0.6);
  }
  add("circle", { cx: 551, cy: 391, r: 2, fill: "#e8e820" });

  for (i = 1; i < 18; i++) outlineFront(T1, 170 + i * 11.7, "#2b2b8c", 0.8);
  // roof ring of tower A
  poly(T1.map(function (p) { return [p[0], p[1] + 170]; }), "none", "#4a4aaa", 4);

  // red grid front edge over the tower foot
  line(PA, PD, "#c01a2a", 1); line(PD, PC, "#c01a2a", 1);
  line([516, 339], [539, 350], "#c01a2a", 0.9); line([539, 350], [564, 345], "#c01a2a", 0.9);

  // axis marks along the podium
  [[481, 318], [477, 326], [495, 322], [490, 338], [497, 345], [506, 351], [517, 357], [538, 362],
   [552, 353], [586, 345], [608, 341], [627, 345], [638, 338], [590, 306], [604, 313], [617, 320], [627, 327]].forEach(function (c) {
    add("circle", { cx: c[0], cy: c[1], r: 7, fill: "none", stroke: "#0c7a20", "stroke-width": 0.8 });
  });
  [[472, 321, "1-N", 0], [468, 333, "1-1", 0], [476, 337, "1-1", 0], [483, 340, "1-1", 0], [490, 345, "1-1", 0], [498, 350, "1-1", 0], [504, 354, "1-1", 0],
   [510, 361, "1-D", 0], [495, 319, "3200", -18], [490, 328, "3000", 30], [500, 336, "3000", 30], [512, 344, "3000", 30], [524, 350, "3000", 30],
   [560, 361, "CL", 0], [588, 356, "[-]", 0], [608, 352, "1-G", 0], [627, 349, "1-F", 0], [636, 337, "1-10", 0],
   [624, 330, "1-11", 0], [612, 323, "1-12", 0], [598, 316, "1-13", 0], [583, 309, "1-14", 30], [570, 304, "1-15", 30],
   [580, 344, "3000", -14], [598, 340, "3000", -14], [615, 338, "4000", -14], [608, 326, "3000", 30], [622, 336, "3000", 30]].forEach(function (t) {
    label(t[0], t[1], t[2], t[3], 8.500);
  });
  label(533, 414, "850", -20, 10); label(524, 424, "8", 0, 8); label(538, 465, "1900", -15, 10);
  label(574, 479, "c400", 30, 10); label(574, 492, "4350", 30, 10);
  label(598, 455, "52", 20, 9); label(590, 464, "5", 0, 7); label(720, 391, "J0", 0, 9); label(707, 390, "1:", 0, 9);
  label(632, 385, "26", 0, 8); label(633, 413, "27", 0, 8);

  // axis gizmo
  line([353, 546], [353, 532], "#1a1aff", 3);
  poly([[353, 527], [349, 534], [357, 534]], "#1a1aff");
  line([352, 546], [342, 547], "#19e019", 3);
  poly([[337, 547], [344, 543], [344, 551]], "#19e019");
  add("circle", { cx: 348, cy: 541, r: 3.500, fill: "#d01010" });
  add("rect", { x: 351, y: 543, width: 5, height: 5, fill: "#bbb" });
  label(353, 526, "Z", 0, 8, "#1a1aff");
  label(343, 540, "X", 0, 8, "#e01515");
  label(335, 552, "Y", 0, 8, "#19c019");
</script>
</body>
</html>
